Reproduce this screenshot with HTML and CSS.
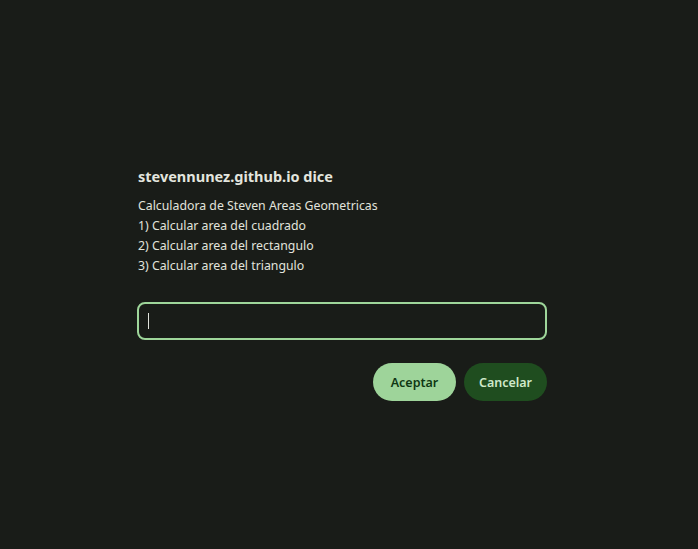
FILE: index.html
```html
<!DOCTYPE html>
<html lang="es">
<head>
<meta charset="utf-8">
<link rel="stylesheet" href="styles.css">
</head>
<body>
<div class="dialog">
  <h1 class="title">stevennunez.github.io dice</h1>
  <div class="message">
    <p>Calculadora de Steven Areas Geometricas</p>
    <p>1) Calcular area del cuadrado</p>
    <p>2) Calcular area del rectangulo</p>
    <p>3) Calcular area del triangulo</p>
  </div>
  <div class="field"><span class="caret"></span></div>
  <div class="actions">
    <button class="btn btn-ok">Aceptar</button>
    <button class="btn btn-cancel">Cancelar</button>
  </div>
</div>
</body>
</html>
```
FILE: styles.css
```css
html, body {
  margin: 0;
  padding: 0;
  background: #191c18;
  height: 100%;
}
body {
  font-family: "Noto Sans", "Open Sans", sans-serif;
  color: #e1e3dc;
}
.dialog {
  width: 410px;
  margin-left: 137px;
  padding-top: 165px;
  display: flex;
  flex-direction: column;
}
.title {
  margin: 0 0 0 1px;
  font-size: 14.5px;
  font-weight: 700;
  line-height: 22px;
  color: #e3e5de;
}
.message {
  margin: 9px 0 0 1px;
  font-size: 12.3px;
  line-height: 20px;
}
.message p {
  margin: 0;
}
.field {
  margin-top: 26px;
  height: 34px;
  border: 2px solid #9ed69a;
  border-radius: 8px;
  display: flex;
  align-items: center;
  padding-left: 9px;
}
.caret {
  width: 1px;
  height: 16px;
  background: #e1e3dc;
}
.actions {
  margin-top: 23px;
  display: flex;
  justify-content: flex-end;
  gap: 8px;
}
.btn {
  height: 38px;
  width: 83px;
  border: none;
  border-radius: 19px;
  font-family: "Noto Sans", "Open Sans", sans-serif;
  font-size: 12.5px;
  font-weight: 600;
  padding: 0;
}
.btn-ok {
  background: #9ed49a;
  color: #0f3813;
}
.btn-cancel {
  background: #1f4d1f;
  color: #cfe9c9;
}
```
